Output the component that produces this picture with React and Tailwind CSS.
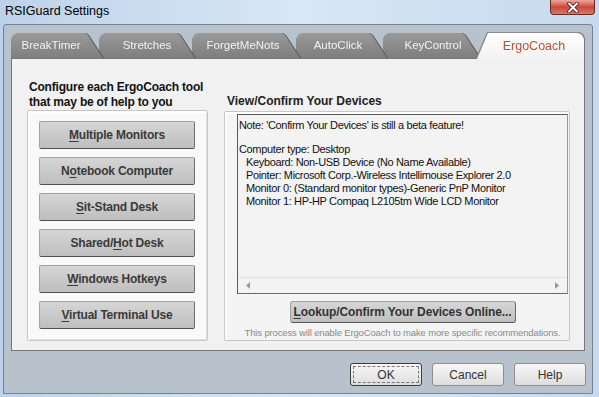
const tabs = [
  { label: "BreakTimer", box: "w-[92px] z-[6]", text: "w-[80px]" },
  { label: "Stretches", box: "w-[96px] -ml-[4px] z-[5]", text: "w-[96px]" },
  { label: "ForgetMeNots", box: "w-[108px] -ml-[3px] z-[4]", text: "w-[102px]" },
  { label: "AutoClick", box: "w-[91px] -ml-[4px] z-[3]", text: "w-[84px]" },
  { label: "KeyControl", box: "w-[97px] -ml-[4px] z-[2]", text: "w-[100px]" },
];

const tools = [
  { key: "M", rest: "ultiple Monitors" },
  { pre: "N", key: "o", rest: "tebook Computer" },
  { key: "S", rest: "it-Stand Desk" },
  { pre: "Shared/", key: "H", rest: "ot Desk" },
  { key: "W", rest: "indows Hotkeys" },
  { key: "V", rest: "irtual Terminal Use" },
];

const devices = [
  "Keyboard: Non-USB Device (No Name Available)",
  "Pointer: Microsoft Corp.-Wireless Intellimouse Explorer 2.0",
  "Monitor 0: (Standard monitor types)-Generic PnP Monitor",
  "Monitor 1: HP-HP Compaq L2105tm Wide LCD Monitor",
];

const CloseButton = () => (
  <div className="w-[45px] h-[15px] mr-[4px] rounded-b-[4px] border border-t-0 border-[#6b2b22] bg-linear-to-b from-[#e9a99c] via-[#c8473a] to-[#d97a62] flex items-center justify-center">
    <svg width="14" height="11" viewBox="0 0 14 11">
      <path d="M3 1.5 L11 9.5 M11 1.5 L3 9.5" stroke="#4a1610" strokeWidth="3.6" strokeLinecap="round" />
      <path d="M3 1.5 L11 9.5 M11 1.5 L3 9.5" stroke="#ffffff" strokeWidth="2" strokeLinecap="round" />
    </svg>
  </div>
);

const ToolButton = ({ t }) => (
  <button className="w-[156px] h-[28px] shrink-0 rounded-[2px] border border-[#a4a4a4] border-b-[#4f4f4f] border-r-[#6f6f6f] bg-linear-to-b from-[#d6d6d6] to-[#bebebe] text-[12px] font-bold text-[#3a3a3a] tracking-[-0.2px]">
    {t.pre}
    <span className="underline underline-offset-2">{t.key}</span>
    {t.rest}
  </button>
);

const DialogButton = ({ label, focus }) => (
  <button
    className={
      "w-[72px] h-[23px] rounded-[3px] bg-linear-to-b from-[#f7f7f7] to-[#dedede] text-[12px] text-[#333] flex items-center justify-center " +
      (focus ? "border border-[#3c3c3c] p-[2px]" : "border border-[#8e8e8e]")
    }
  >
    {focus ? (
      <span className="w-full h-full border border-dashed border-[#777] flex items-center justify-center">
        {label}
      </span>
    ) : (
      label
    )}
  </button>
);

export default function App() {
  return (
    <div className="w-[599px] h-[397px] overflow-hidden flex flex-col bg-linear-to-r from-[#bdd2ea] via-[#d8e7f6] to-[#c6d9ee] font-['Liberation_Sans',Arial,sans-serif] select-none">
      {/* title bar */}
      <div className="h-[24px] shrink-0 flex justify-between items-start">
        <div className="pl-[5px] pt-[3px] text-[12.5px] text-black leading-[16px]">RSIGuard Settings</div>
        <CloseButton />
      </div>

      {/* client area */}
      <div className="ml-[3px] mr-[6px] h-[370px] shrink-0 border border-[#76838f] rounded-t-[3px] bg-[#b8c2cc] flex flex-col">
        {/* tabs */}
        <div className="mt-[8px] ml-[7px] h-[26px] -mb-[1px] flex relative z-10">
          {tabs.map((t) => (
            <div key={t.label} className={"relative shrink-0 h-[25px] [filter:drop-shadow(1px_0_0_#505050)] " + t.box}>
              <div className="h-full flex items-center bg-linear-to-b from-[#9a9a9a] to-[#7e7e7e] [clip-path:polygon(0_100%,0_6px,2px_2px,6px_0,calc(100%_-_18px)_0,calc(100%_-_15px)_2px,100%_100%)]">
                <span className={"shrink-0 text-center text-[11.5px] text-[#f2f2f2] " + t.text}>{t.label}</span>
              </div>
            </div>
          ))}
          <div className="relative shrink-0 w-[107px] h-[26px] -ml-[3px] z-[7] [filter:drop-shadow(0_-1px_0_#8a8a8a)_drop-shadow(1px_0_0_#777777)_drop-shadow(-1px_0_0_#8a8a8a)]">
            <div className="h-full flex items-center bg-linear-to-b from-[#ffffff] to-[#f2f2f2] [clip-path:polygon(0_100%,11px_0,calc(100%_-_6px)_0,calc(100%_-_2px)_2px,100%_6px,100%_100%)]">
              <span className="shrink-0 w-[114px] text-center text-[12.5px] text-[#b4532a]">ErgoCoach</span>
            </div>
          </div>
        </div>

        {/* tab panel */}
        <div className="ml-[7px] w-[574px] h-[293px] shrink-0 border border-[#777] bg-[#f1f1f1] flex">
          {/* left column */}
          <div className="ml-[15px] w-[181px] pt-[21px] flex flex-col">
            <div className="pl-[2px] text-[12px] font-bold leading-[15px] text-[#111] h-[30px] whitespace-nowrap tracking-[-0.2px]">
              Configure each ErgoCoach tool
              <br />
              that may be of help to you
            </div>
            <div className="h-[231px] border border-[#c6c6c6] rounded-[2px] bg-[#f9f9f9] shadow-[inset_2px_2px_0_#ffffff,inset_-1px_-1px_0_#e2e2e2] pl-[11px] pt-[10px] flex flex-col gap-[8px]">
              {tools.map((t, i) => (
                <ToolButton key={i} t={t} />
              ))}
            </div>
          </div>

          {/* right column */}
          <div className="ml-[16px] w-[346px] pt-[35px] flex flex-col">
            <div className="pl-[3px] text-[12px] font-bold leading-[15px] text-[#222] h-[15px]">
              View/Confirm Your Devices
            </div>
            <div className="mt-[2px] h-[230px] border border-[#c6c6c6] rounded-[2px] bg-[#f4f4f4] shadow-[inset_2px_2px_0_#ffffff] flex flex-col pl-[12px] pr-[1px] pt-[2px]">
              <div className="h-[180px] border border-[#5a5a5a] border-r-[#9a9a9a] border-b-[#6a6a6a] bg-[#f3f3f3] flex flex-col">
                <div className="flex-1 pl-[1px] pt-[4px] text-[11px] leading-[13px] tracking-[-0.35px] text-[#111] whitespace-nowrap">
                  <div>Note: 'Confirm Your Devices' is still a beta feature!</div>
                  <div className="mt-[11px]">Computer type: Desktop</div>
                  {devices.map((d) => (
                    <div key={d} className="pl-[7px]">{d}</div>
                  ))}
                </div>
                <div className="h-[16px] border-t border-[#e0e0e0] flex items-center justify-between px-[8px]">
                  <svg width="4" height="7" viewBox="0 0 4 7">
                    <path d="M4 0 L0 3.5 L4 7 Z" fill="#9a9a9a" />
                  </svg>
                  <svg width="4" height="7" viewBox="0 0 4 7">
                    <path d="M0 0 L4 3.5 L0 7 Z" fill="#9a9a9a" />
                  </svg>
                </div>
              </div>
              <div className="mt-[7px] flex justify-center">
                <button className="w-[226px] h-[22px] rounded-[3px] border border-[#a0a0a0] border-b-[#555] border-r-[#6a6a6a] bg-linear-to-b from-[#d6d6d6] to-[#bfbfbf] text-[12px] font-bold text-[#333] tracking-[-0.1px]">
                  <span className="underline underline-offset-2">L</span>ookup/Confirm Your Devices Online...
                </button>
              </div>
              <div className="mt-[4px] text-center text-[9.5px] leading-[12px] tracking-[-0.15px] text-[#8a8a8a] whitespace-nowrap">
                This process will enable ErgoCoach to make more specific recommendations.
              </div>
            </div>
          </div>
        </div>

        {/* dialog buttons */}
        <div className="mt-[12px] pr-[6px] flex justify-end gap-[10px]">
          <DialogButton label="OK" focus />
          <DialogButton label="Cancel" />
          <DialogButton label="Help" />
        </div>
      </div>
    </div>
  );
}
